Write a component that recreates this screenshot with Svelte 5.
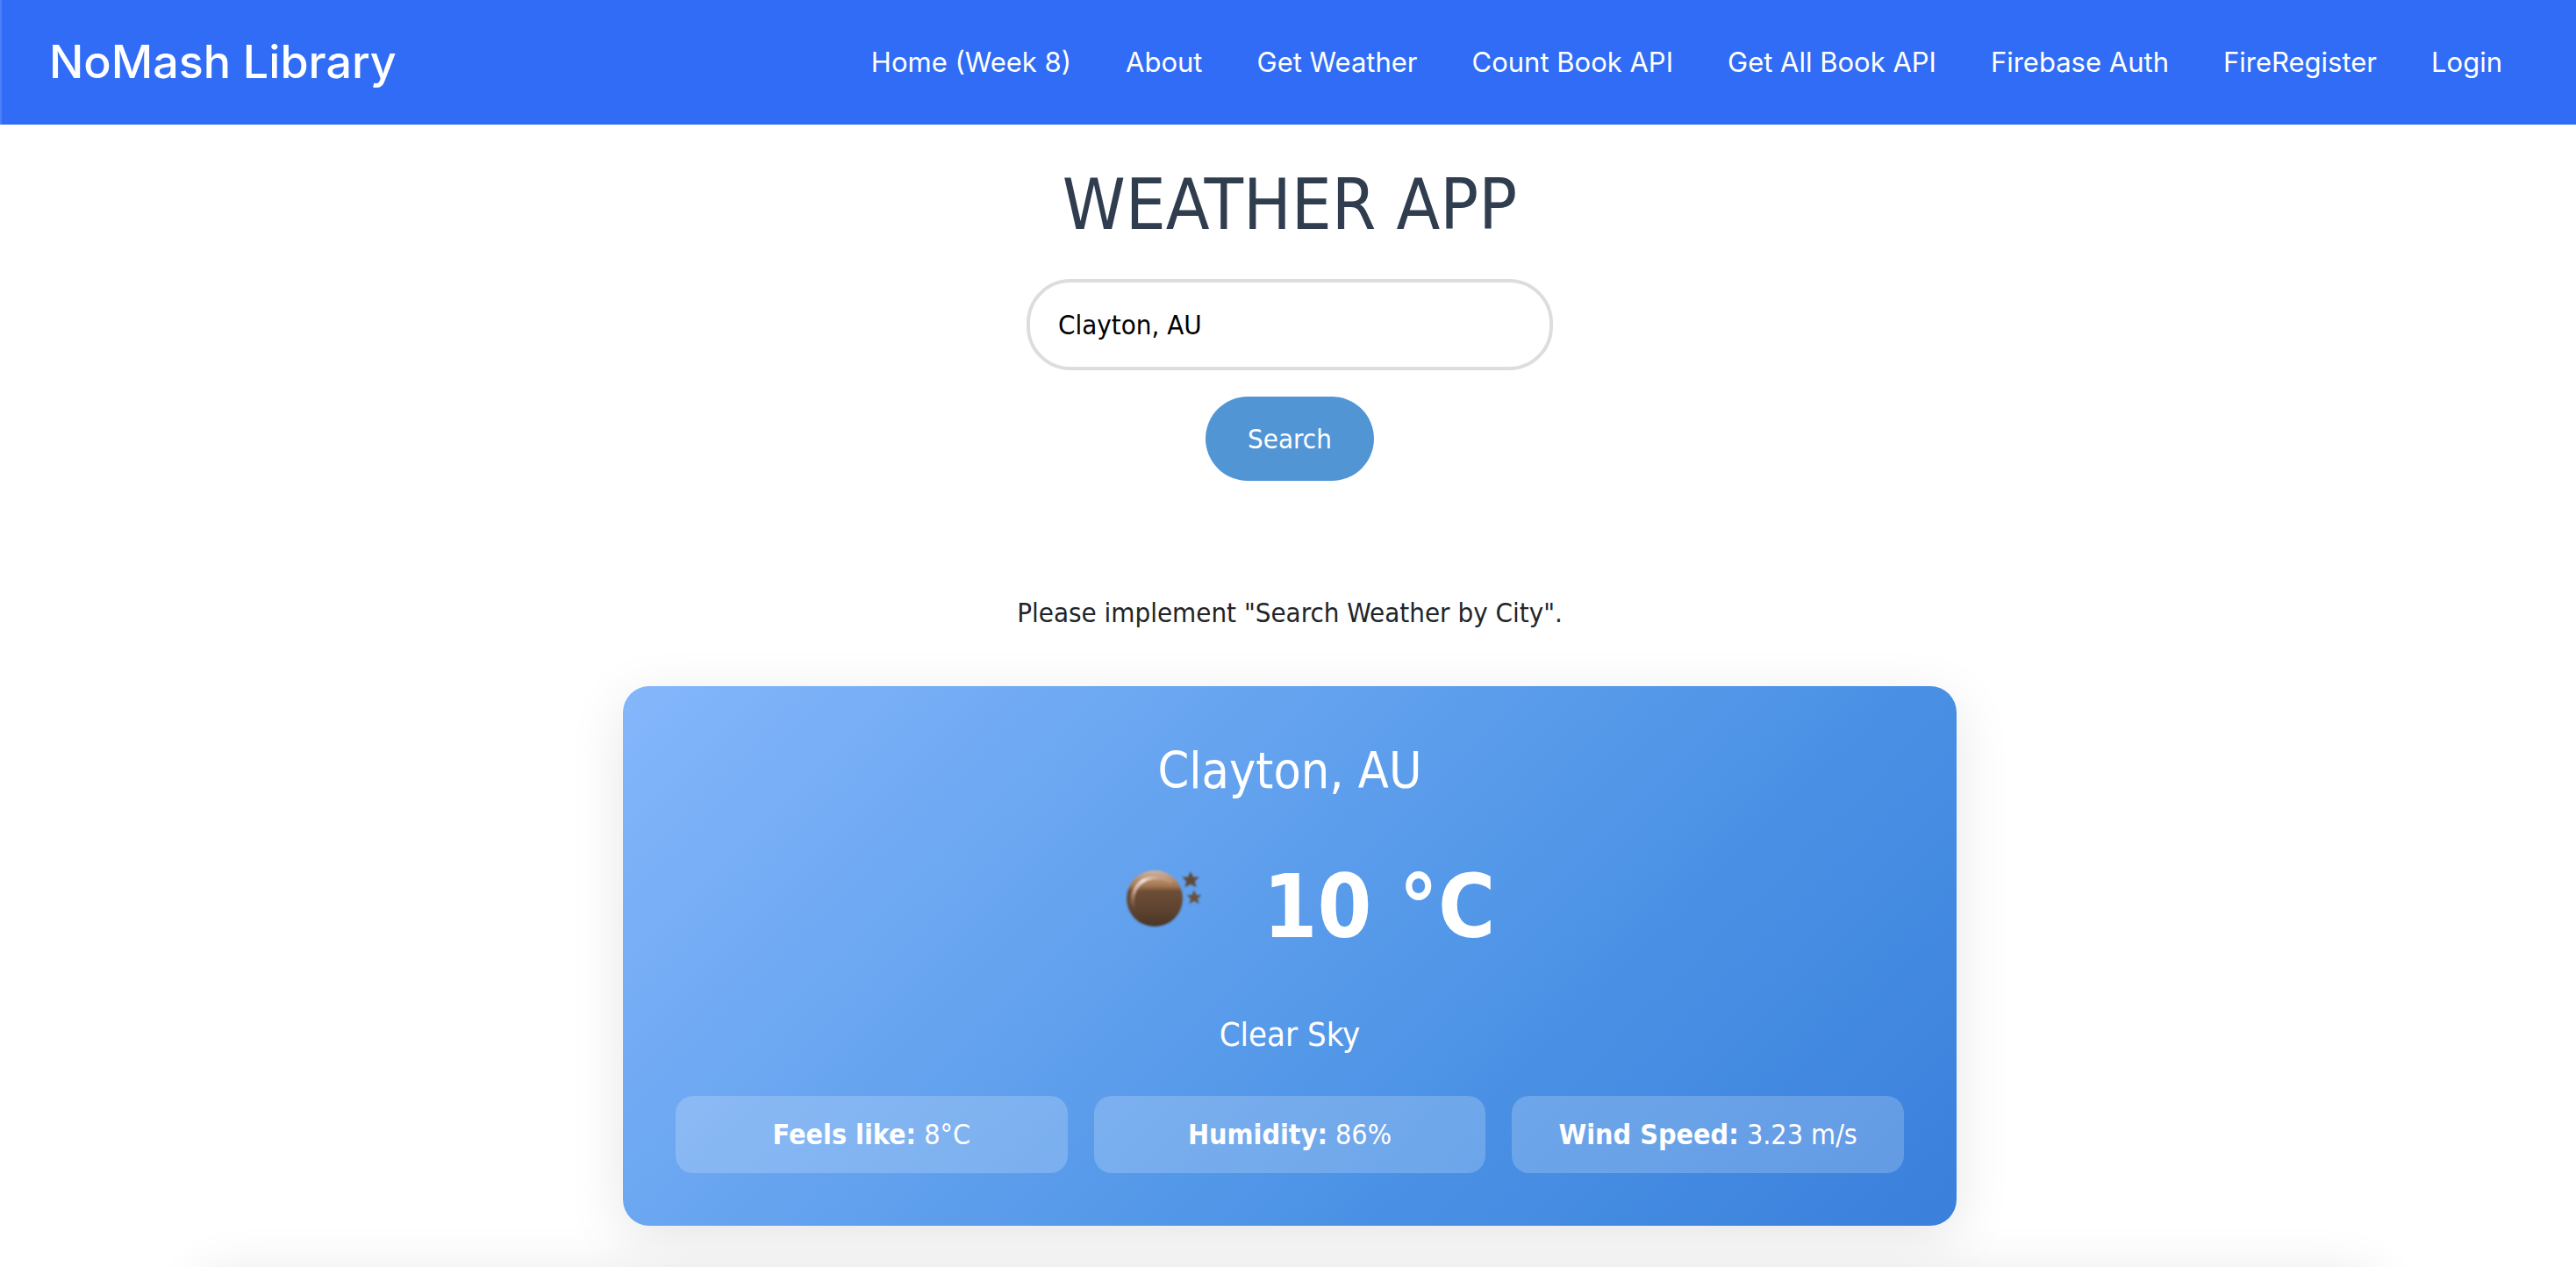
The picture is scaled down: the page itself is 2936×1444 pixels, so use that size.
<script>
  const links = [
    'Home (Week 8)',
    'About',
    'Get Weather',
    'Count Book API',
    'Get All Book API',
    'Firebase Auth',
    'FireRegister',
    'Login'
  ];

  let city = $state('Clayton, AU');

  const details = [
    { label: 'Feels like:', value: '8°C' },
    { label: 'Humidity:', value: '86%' },
    { label: 'Wind Speed:', value: '3.23 m/s' }
  ];
</script>

<div class="page">
  <header class="navbar">
    <a class="brand" href="#home">NoMash Library</a>
    <nav>
      {#each links as link}
        <a href="#{link}">{link}</a>
      {/each}
    </nav>
  </header>

  <main>
    <h1>WEATHER APP</h1>

    <form onsubmit={(e) => e.preventDefault()}>
      <input type="text" aria-label="City" bind:value={city} />
      <button type="submit">Search</button>
    </form>

    <p class="hint">Please implement "Search Weather by City".</p>

    <section class="card">
      <h2>Clayton, AU</h2>
      <div class="current">
        <svg class="icon" viewBox="0 0 100 100" role="img" aria-label="Clear night">
          <defs>
            <linearGradient id="moon" x1="0" y1="0" x2="0" y2="1">
              <stop offset="0" stop-color="#cdb6a6" />
              <stop offset="0.16" stop-color="#b98e6c" />
              <stop offset="0.28" stop-color="#a17550" />
              <stop offset="0.37" stop-color="#6d4e36" />
              <stop offset="0.7" stop-color="#5e4330" />
              <stop offset="1" stop-color="#4a3527" />
            </linearGradient>
            <linearGradient id="rim" x1="0" y1="1" x2="0.7" y2="0">
              <stop offset="0.1" stop-color="#a47a5c" stop-opacity="0" />
              <stop offset="0.45" stop-color="#c9a68e" />
              <stop offset="0.75" stop-color="#f0e4dc" />
              <stop offset="1" stop-color="#e0c8b6" stop-opacity="0.2" />
            </linearGradient>
            <filter id="soft" x="-10%" y="-10%" width="120%" height="120%">
              <feGaussianBlur stdDeviation="1.2" />
            </filter>
          </defs>
          <g filter="url(#soft)">
            <circle cx="46" cy="50" r="32" fill="url(#moon)" />
            <path d="M24 68 C15 46 26 27 46 26 C54 26 60 28 65 32" fill="none" stroke="url(#rim)" stroke-width="4" />
            <path d="M87 21 l2.500 5 5.500 .2 -4 4 1.400 5.600 -5.400 -3 -5.400 3 1.400 -5.600 -4 -4 5.500 -.2z" fill="#604a3b" stroke="#604a3b" stroke-width="1.500" />
            <path d="M91 42 l2 4.500 4.600 .1 -3.400 3.300 1.200 4.600 -4.400 -2.500 -4.400 2.500 1.200 -4.600 -3.400 -3.300 4.600 -.1z" fill="#675142" stroke="#675142" stroke-width="1.500" />
          </g>
        </svg>
        <span class="temp">10 °C</span>
      </div>
      <p class="sky">Clear Sky</p>
      <div class="details">
        {#each details as d}
          <div class="detail"><strong>{d.label}</strong> {d.value}</div>
        {/each}
      </div>
    </section>
  </main>

  <div class="panel"></div>
</div>

<style>
  :global(body) {
    overflow: hidden;
    background: #fff;
  }
  .page {
    height: 100vh;
    overflow: hidden;
    color: #212529;
    font: 31px/48px 'DejaVu Sans Condensed', 'DejaVu Sans', sans-serif;
    font-stretch: condensed;
  }
  .navbar {
    display: flex;
    align-items: center;
    justify-content: space-between;
    box-sizing: border-box;
    height: 142px;
    padding: 0 84px 0 54px;
    border-left: 2px solid #4b80f7;
    background: #306cf5;
    font-family: Inter, sans-serif;
  }
  .navbar a {
    color: #fff;
    text-decoration: none;
  }
  .navbar .brand {
    font-size: 52px;
    font-weight: 500;
  }
  nav {
    display: flex;
    gap: 62px;
  }
  main {
    display: flex;
    flex-direction: column;
    align-items: center;
    padding: 44px 56px 0 60px;
  }
  h1,
  h2,
  p {
    margin: 0;
    font-weight: 400;
  }
  h1 {
    color: #2f3d4f;
    font-size: 81px;
    line-height: 94px;
  }
  form {
    display: flex;
    flex-direction: column;
    align-items: center;
    gap: 30px;
    margin-top: 38px;
  }
  input {
    box-sizing: border-box;
    width: 600px;
    height: 104px;
    padding: 0 32px;
    border: 4px solid #ddd;
    border-radius: 50px;
    outline: 0;
    background: #fff;
    color: #000;
    font: inherit;
  }
  button {
    height: 96px;
    padding: 0 48px;
    border: 0;
    border-radius: 50px;
    background: #5295d5;
    color: #fff;
    font: inherit;
  }
  .hint {
    margin-top: 126px;
  }
  .card {
    box-sizing: border-box;
    width: 100%;
    max-width: 1520px;
    margin-top: 60px;
    padding: 60px;
    border-radius: 30px;
    background: linear-gradient(135deg, #84b6fb, #5d9eec 45%, #4a91e5 68%, #3a80dc);
    box-shadow: 0 16px 64px rgba(0, 0, 0, 0.1);
    color: #fff;
    text-align: center;
  }
  h2 {
    font-size: 57px;
    line-height: 72px;
  }
  .current {
    display: flex;
    align-items: center;
    justify-content: center;
    gap: 70px;
    height: 160px;
    margin-top: 40px;
    padding-left: 34px;
  }
  .icon {
    align-self: flex-start;
    width: 100px;
    height: 100px;
    margin-top: 20px;
  }
  .temp {
    font-size: 99px;
    font-weight: 700;
    line-height: 144px;
  }
  .sky {
    margin-top: 35px;
    font-size: 38px;
    line-height: 60px;
  }
  .details {
    display: grid;
    grid-template-columns: repeat(3, 1fr);
    gap: 30px;
    margin-top: 40px;
  }
  .detail {
    padding: 20px;
    border-radius: 20px;
    background: rgba(255, 255, 255, 0.2);
    font-size: 32px;
  }
  .panel {
    height: 400px;
    max-width: 2480px;
    margin: 60px auto 0;
    border-radius: 30px;
    box-shadow: 0 0 64px rgba(0, 0, 0, 0.12);
  }
</style>
